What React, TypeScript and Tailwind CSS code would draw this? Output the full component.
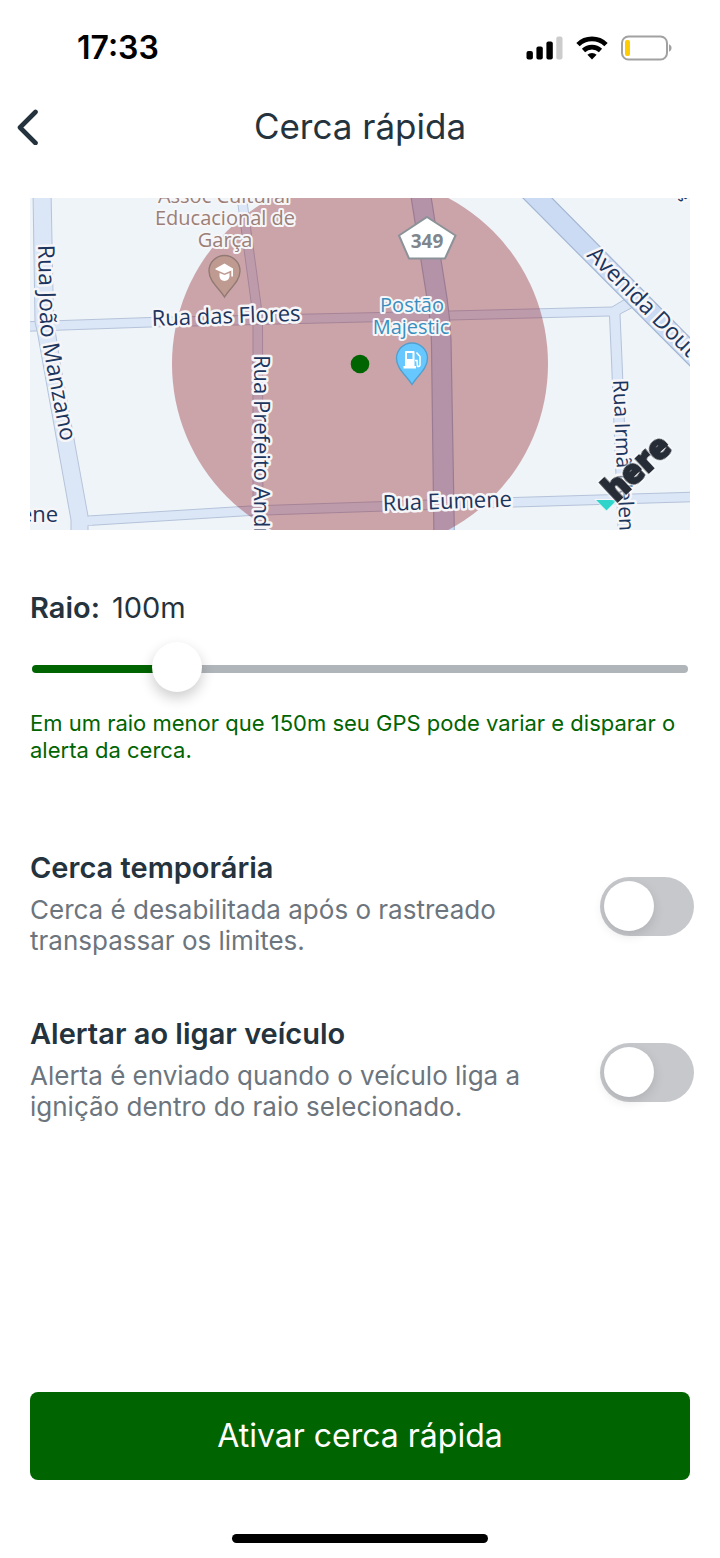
import { useState, type CSSProperties } from "react";

const INK = "#1c355e";

function StatusBar() {
  return (
    <div className="flex h-24 items-center justify-between pr-12 pl-[77px]">
      <span className="text-[32px] leading-10 font-semibold text-black">17:33</span>
      <div className="flex items-center gap-[13px]">
        <svg width="37" height="24" viewBox="0 0 37 24" aria-hidden="true">
          <rect x="0.5" y="15" width="6.400" height="8.500" rx="2" fill="#000" />
          <rect x="10.400" y="10.500" width="6.400" height="13" rx="2" fill="#000" />
          <rect x="20.400" y="5.500" width="6.400" height="18" rx="2" fill="#000" />
          <rect x="30.300" y="0.500" width="6.200" height="23" rx="2" fill="#ccc" />
        </svg>
        <svg width="32" height="24" viewBox="0 0 32 24" aria-hidden="true">
          <path d="M2 8.600a20 20 0 0 1 28 0" fill="none" stroke="#000" strokeWidth="4.800" />
          <path d="M7.500 14.500a12.300 12.300 0 0 1 17 0" fill="none" stroke="#000" strokeWidth="4.600" />
          <path d="M16 23.500l-4.600-4.700a6.800 6.800 0 0 1 9.200 0z" fill="#000" />
        </svg>
        <svg width="51" height="26" viewBox="0 0 51 26" aria-hidden="true">
          <rect x="1" y="1.500" width="45" height="23" rx="6.500" fill="none" stroke="#a1a1a1" strokeWidth="2" />
          <rect x="4" y="5" width="5" height="16" rx="2" fill="#ffcc02" />
          <path d="M48 9.300c3.400 1.400 3.400 6 0 7.400z" fill="#a1a1a1" />
        </svg>
      </div>
    </div>
  );
}

function Header() {
  return (
    <header className="grid h-[60px] grid-cols-[60px_1fr_60px] items-center">
      <button type="button" aria-label="Voltar" className="flex h-[60px] items-center pl-4">
        <svg width="24" height="38" viewBox="0 0 24 38" fill="none" aria-hidden="true">
          <path d="M19.500 5L4 20.500L19.500 36" stroke="#24333d" strokeWidth="4.600" strokeLinecap="round" strokeLinejoin="round" />
        </svg>
      </button>
      <h1 className="text-center text-[35px] leading-[48px] font-normal">Cerca rápida</h1>
    </header>
  );
}

function FenceMap() {
  const halo = {
    stroke: "#f6f6f8",
    strokeWidth: 5,
    strokeLinejoin: "round" as const,
    paintOrder: "stroke",
  };
  const road = { fill: "#dbe6f7", stroke: "#b5c3da", strokeWidth: 1 };
  return (
    <svg
      viewBox="30 198 660 332"
      className="block w-full font-['Open_Sans','Noto_Sans',sans-serif]"
      role="img"
      aria-label="Mapa da cerca"
    >
      <defs>
        <path id="joao" d="M38 245L40 322Q41 337 45 358L72 500" />
      </defs>
      <rect x="30" y="198" width="660" height="332" fill="#eef4f8" />
      <g {...road}>
        <path d="M236 190L253 316L253 540H263L262.500 316L245.500 190Z" />
        <path d="M20 322L150 317.500L450 311L612 307L627 298L636 305.500L620 314L622 360L629 540H618.500L611.500 360L609.500 316L450 320L150 327L20 331.500Z" />
        <path d="M80 516.500L250 506L430 500L700 492V501.500L430 509.500L250 515.500L80 526Z" />
        <path d="M33 190L35 322L37.500 333L71 520V540H88V516L60 362L53.500 320L51 190Z" />
      </g>
      <g stroke="none" fill="#dbe6f7">
        <path d="M36 323L58 321.300V329.500L38 330.500Z" />
        <path d="M84 517L92 516.400V525.200L84 525.600Z" />
        <path d="M254 316H262V324H254Z" />
        <path d="M254 506.500H262.500V515H254Z" />
        <path d="M611.500 493.500H628V505H613Z" />
      </g>
      <path d="M515 190L700 376V348L544 190Z" fill="#cbdbf4" stroke="#a4b6d2" strokeWidth="1.200" />
      <path d="M410 190L428 305Q431 322 431.500 345L434 540H454.500L451 340Q450 318 447 298L430 190Z" fill="#cbdbf4" stroke="#a4b6d2" strokeWidth="1.200" />
      <circle cx="360" cy="364" r="188" fill="#890f19" fillOpacity="0.35" />
      <circle cx="360" cy="364" r="9.300" fill="#006400" />

      <g fontSize="22" fontWeight="500" fill={INK} {...halo}>
        <text fontSize="23">
          <textPath href="#joao">Rua João Manzano</textPath>
        </text>
        <text transform="translate(152 326) rotate(-2)">Rua das Flores</text>
        <text transform="translate(254 355) rotate(90)">Rua Prefeito André</text>
        <text transform="translate(383 511) rotate(-2)">Rua Eumene</text>
        <text x="20" y="522">ene</text>
        <text fontSize="21" transform="translate(613 380) rotate(87.500)">Rua Irmã Helena</text>
        <text fontSize="23" transform="translate(586 256) rotate(45)">Avenida Doutor</text>
        <text transform="translate(670 184) rotate(45)">aç</text>
      </g>

      <g fontSize="20" fontWeight="500" textAnchor="middle" fill="#9a7f78" {...halo} strokeWidth={4}>
        <text x="224" y="203">Assoc Cultural</text>
        <text x="225" y="225">Educacional de</text>
        <text x="225" y="247">Garça</text>
      </g>
      <g fontSize="20" fontWeight="500" textAnchor="middle" fill="#3b8fbf" {...halo} strokeWidth={4}>
        <text x="412" y="312">Postão</text>
        <text x="411" y="334">Majestic</text>
      </g>

      <path d="M224.500 297C220 289 209 281.500 209 271A15.500 15.500 0 0 1 240 271C240 281.500 229 289 224.500 297Z" fill="#bf9a91" stroke="#927a74" strokeWidth="1.400" />
      <path d="M215.500 268.500L224.500 263.500L233 268.500V276.500H231.300V270.500L224.500 273.500L215.500 269.500Z" fill="#fff" />
      <path d="M219.500 273L224.500 275L229.500 273V276.500Q229 280.500 224.500 281Q220 280.500 219.500 276.500Z" fill="#fff" />

      <path d="M412 384.500C407.500 376.500 396.500 369 396.500 358.500A15.500 15.500 0 0 1 427.500 358.500C427.500 369 416.500 376.500 412 384.500Z" fill="#67c8ff" stroke="#529fce" strokeWidth="1.400" />
      <path fillRule="evenodd" d="M406 351H413.500Q414.500 351 414.500 352V366H416V368.500H403.500V366H405V352Q405 351 406 351ZM407 353V359H412.500V353Z" fill="#fff" />
      <path d="M416.500 352.500L420 356.500V365Q419.500 367 417.500 366.500L417 360.500H415" fill="none" stroke="#fff" strokeWidth="1.500" />

      <path d="M427 217L455.500 235.500L445 258.500H409L399 235.500Z" fill="#fff" stroke="#8b9298" strokeWidth="2" />
      <text x="427" y="248" fontSize="19" fontWeight="700" textAnchor="middle" fill="#80868c">349</text>

      <path d="M595 499.500H618L606.500 511Z" fill="#2fd5cb" stroke="#f6f6f8" strokeWidth="1" />
      <text
        transform="translate(616 503) rotate(-43)"
        fontSize="33"
        fontWeight="800"
        fill="#272d37"
        stroke="#272d37"
        strokeWidth="2"
        className="[filter:drop-shadow(0_0_1px_#fff)_drop-shadow(0_0_1px_#fff)]"
      >
        here
      </text>
    </svg>
  );
}

function RadiusSlider() {
  const [radius, setRadius] = useState(100);
  const min = 1;
  const max = 500;
  const filled = ((radius - min) / (max - min)) * 100;
  const fill = {
    "--fill": `linear-gradient(to right, #006400 ${filled}%, #b0b5b9 ${filled}%)`,
  } as CSSProperties;
  return (
    <section className="mt-14">
      <label htmlFor="radius" className="flex gap-3 text-[29px] leading-[44px]">
        <span className="font-semibold">Raio:</span>
        <span>{radius}m</span>
      </label>
      <div className="mt-3 px-[2px]">
        <input
          id="radius"
          type="range"
          min={min}
          max={max}
          value={radius}
          onChange={(e) => setRadius(Number(e.target.value))}
          style={fill}
          className="block h-[54px] w-full appearance-none bg-transparent [&::-webkit-slider-runnable-track]:h-2 [&::-webkit-slider-runnable-track]:rounded-full [&::-webkit-slider-runnable-track]:bg-(image:--fill) [&::-webkit-slider-thumb]:-mt-[23px] [&::-webkit-slider-thumb]:size-[50px] [&::-webkit-slider-thumb]:appearance-none [&::-webkit-slider-thumb]:rounded-full [&::-webkit-slider-thumb]:bg-white [&::-webkit-slider-thumb]:shadow-[0_6px_14px_rgba(0,0,0,0.2)]"
        />
      </div>
      <p className="mt-[14px] text-[22px] leading-[27px] text-[#006400]">
        Em um raio menor que 150m seu GPS pode variar e disparar o alerta da cerca.
      </p>
    </section>
  );
}

type ToggleRowProps = { id: string; title: string; description: string };

function ToggleRow({ id, title, description }: ToggleRowProps) {
  return (
    <div className="-mr-1 flex items-center justify-between gap-6">
      <div className="max-w-[510px]">
        <label htmlFor={id} className="block text-[29px] leading-[44px] font-semibold">
          {title}
        </label>
        <p id={`${id}-hint`} className="mt-1 text-[26px] leading-[31px] text-[#6c757d]">
          {description}
        </p>
      </div>
      <input
        id={id}
        type="checkbox"
        role="switch"
        aria-describedby={`${id}-hint`}
        className="mt-[10px] h-[59px] w-[94px] shrink-0 appearance-none rounded-full bg-[#c6c8cc] p-1 before:block before:size-[50px] before:rounded-full before:bg-white before:shadow-[0_4px_12px_rgba(0,0,0,0.12)] checked:bg-[#006400] checked:before:ml-9"
      />
    </div>
  );
}

export default function App() {
  return (
    <div className="flex min-h-screen flex-col bg-white font-['Inter',sans-serif] text-[#24333d]">
      <StatusBar />
      <Header />
      <main className="flex flex-1 flex-col px-[30px] pt-[42px]">
        <FenceMap />
        <RadiusSlider />
        <div className="mt-[82px] flex flex-col gap-14">
          <ToggleRow
            id="temporary"
            title="Cerca temporária"
            description="Cerca é desabilitada após o rastreado transpassar os limites."
          />
          <ToggleRow
            id="ignition"
            title="Alertar ao ligar veículo"
            description="Alerta é enviado quando o veículo liga a ignição dentro do raio selecionado."
          />
        </div>
        <button type="button" className="mt-auto h-[88px] w-full rounded-lg bg-[#006400] text-[32px] leading-10 text-white">
          Ativar cerca rápida
        </button>
      </main>
      <div className="flex h-[78px] justify-center pt-[54px]">
        <div className="h-[9px] w-64 rounded-full bg-black" />
      </div>
    </div>
  );
}
